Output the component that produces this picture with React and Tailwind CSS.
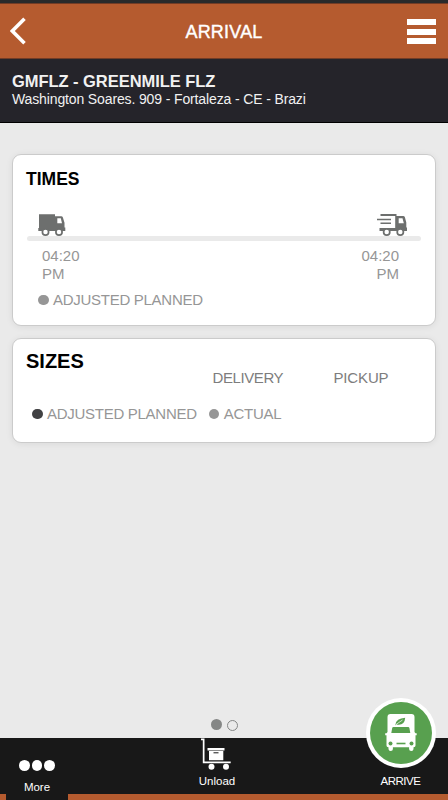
import React from "react";

function ParkedTruck() {
  return (
    <svg width="28" height="22" viewBox="0 0 28 22" className="block">
      <path fill="#6d6f6e" d="M1 .2h16v2h6.200q1.300 0 1.700 1.200l1.600 5.300v4.800h.8v3.500H.3v-3H1z" />
      <path fill="#fff" d="M19.300 4.200h3.500l1.200 5h-4.700z" />
      <circle cx="7.500" cy="18" r="3.100" fill="#fff" stroke="#6d6f6e" strokeWidth="1.700" />
      <circle cx="21" cy="18" r="3.100" fill="#fff" stroke="#6d6f6e" strokeWidth="1.700" />
    </svg>
  );
}

function MovingTruck() {
  return (
    <svg width="30" height="22" viewBox="0 0 30 22" className="block">
      <path fill="#6d6f6e" d="M3.500 .1h16v2h6.700q1.300 0 1.700 1.200l1.400 5.300v4.900h.7V17H2.500v-3h15.700V1.900H3.500z" />
      <path stroke="#6d6f6e" strokeWidth="1.500" d="M0 5.500h14M3.500 9.300H14" />
      <path fill="#fff" d="M21.700 4.200h3.800l1.300 5h-5.100z" />
      <circle cx="9.700" cy="18" r="3.100" fill="#fff" stroke="#6d6f6e" strokeWidth="1.700" />
      <circle cx="23.300" cy="18" r="3.100" fill="#fff" stroke="#6d6f6e" strokeWidth="1.700" />
    </svg>
  );
}

function Trolley() {
  return (
    <svg width="32" height="34" viewBox="0 0 32 34" className="block" fill="#fff">
      <path d="M0 .6h3.500V23.500h26.200v1.800H1.800V2.200H0z" />
      <path d="M6.500 10h17v2.400h-17zM8 13h14.300v9.300H8z" />
      <path stroke="#181818" strokeWidth="1" d="M12.500 14.800h5" />
      <circle cx="10.500" cy="28.700" r="3" />
      <circle cx="25" cy="28.700" r="3" />
    </svg>
  );
}

function ArriveTruck() {
  return (
    <svg width="70" height="70" viewBox="0 0 70 70" className="block">
      <circle cx="35" cy="35" r="35" fill="#fff" />
      <circle cx="35" cy="35" r="31" fill="#58a04f" />
      <path fill="#fff" d="M24.500 16h21q3 0 3 3v15l1 1.200h1.200v2h-1.200v10.300q0 1.800-1.800 1.800h-.2v1.700q0 2-2.200 2t-2.200-2v-1.700H26.900v1.700q0 2-2.200 2t-2.200-2v-1.700h-.2q-1.800 0-1.800-1.800V37.200h-1.300v-2h1.300l1-1.200V19q0-3 3-3z" />
      <path fill="#58a04f" d="M27.500 29h14.700q1 0 1.200 1l.9 5H25.300l.9-5q.2-1 1.300-1zM29.500 26.500q.5-6 9.700-6.700-.5 7-6.500 7-1.300 0-2.200-.6l-1.300 1.200z" />
      <path stroke="#fff" strokeWidth=".7" d="m30 26.500 6.500-4.500" />
      <circle cx="24.500" cy="45.500" r="2" fill="#58a04f" />
      <circle cx="45.500" cy="45.500" r="2" fill="#58a04f" />
      <path fill="#58a04f" d="M30.500 44.700h9v1.600h-9z" />
    </svg>
  );
}

function Label({ dot, children }) {
  return (
    <div className="flex items-center">
      <span className={"mr-[4.500px] size-[10.500px] shrink-0 rounded-full " + dot} />
      <span className="tracking-[-0.28px]">{children}</span>
    </div>
  );
}

export default function App() {
  return (
    <div className="flex h-[800px] w-[448px] flex-col overflow-hidden bg-[#eaeaea] font-['Liberation_Sans',Arial,sans-serif]">
      <div className="h-[3px] shrink-0 bg-[#292a2b]" />
      <header className="flex h-14 shrink-0 items-center justify-between border-b border-t border-b-[#713c26] border-t-[#713c26] bg-[#b55b2f] pl-[10px] pr-3 text-white">
        <svg width="30" height="28" viewBox="0 0 30 28" fill="none" stroke="#fff" strokeWidth="3.600">
          <path d="M14.500 1.800 2.300 14l12.200 12.200" />
        </svg>
        <h1 className="pl-[1px] pt-0.5 text-[18px] leading-5 tracking-[0.2px] [-webkit-text-stroke:0.4px_white]">ARRIVAL</h1>
        <div className="flex flex-col gap-[3.500px] pt-px">
          <span className="h-[6px] w-[29px] bg-white" />
          <span className="h-[6px] w-[29px] bg-white" />
          <span className="h-[6px] w-[29px] bg-white" />
        </div>
      </header>
      <section className="h-16 shrink-0 whitespace-nowrap border-b border-black bg-[#25242a] pl-[12px] pt-[13px] text-[#f1f1f1]">
        <h2 className="text-[16.500px] font-bold leading-[19px] tracking-[-0.05px]">GMFLZ - GREENMILE FLZ</h2>
        <p className="text-[14px] leading-4 tracking-[-0.13px]">Washington Soares. 909 - Fortaleza - CE - Brazi</p>
      </section>

      <main className="flex grow flex-col px-3 pt-[31px]">
        <section className="h-[172px] shrink-0 rounded-[9px] border border-[#cbcbcb] bg-white px-[13px] pt-[14px] text-[#969696] shadow-[0_1px_7px_rgba(0,0,0,0.07)]">
          <h2 className="text-[17.500px] font-bold leading-[21px] text-black">TIMES</h2>
          <div className="mt-[24px] flex h-[22px] justify-between pl-3 pr-[15px]">
            <ParkedTruck />
            <MovingTruck />
          </div>
          <div className="ml-px h-[5px] w-[394px] rounded-full bg-[#eaeaea]" />
          <div className="mt-[6px] flex justify-between pl-[16px] pr-[23px] text-[15px] leading-[17.500px]">
            <p>04:20<br />PM</p>
            <p className="text-right">04:20<br />PM</p>
          </div>
          <div className="mt-[9px] pl-[12px] text-[15px] leading-[18px]">
            <Label dot="bg-[#969696]">ADJUSTED PLANNED</Label>
          </div>
        </section>

        <section className="mt-3 h-[105px] shrink-0 rounded-[9px] border border-[#cbcbcb] bg-white px-[13px] pt-[10px] text-[#969696] shadow-[0_1px_7px_rgba(0,0,0,0.07)]">
          <h2 className="text-[20px] font-bold leading-6 text-black">SIZES</h2>
          <div className="-mt-[4px] flex pl-[186.500px] text-[15px] leading-[18px] tracking-[-0.4px] text-[#7d7d7d]">
            <span className="w-[121px]">DELIVERY</span>
            <span className="tracking-[-0.15px]">PICKUP</span>
          </div>
          <div className="mt-[18px] flex gap-3 pl-[6px] text-[15px] leading-[18px]">
            <Label dot="bg-[#414143]">ADJUSTED PLANNED</Label>
            <Label dot="bg-[#969696]">ACTUAL</Label>
          </div>
        </section>

        <div className="mb-[7px] mt-auto flex items-end justify-center gap-[5px]">
          <span className="mb-px size-[11px] rounded-full bg-[#858786]" />
          <span className="size-[11px] rounded-full border border-[#858786]" />
        </div>
      </main>

      <footer className="h-[62px] shrink-0 bg-[#181818] text-[11.500px] leading-[14px] text-white">
        <div className="flex h-14 justify-between">
          <div className="flex w-[68px] flex-col pl-[6px]">
            <div className="flex justify-center gap-[2.200px] pt-[22px]">
              <span className="size-[10.500px] rounded-full bg-white" />
              <span className="size-[10.500px] rounded-full bg-white" />
              <span className="size-[10.500px] rounded-full bg-white" />
            </div>
            <p className="mt-[9px] text-center">More</p>
          </div>
          <div className="flex grow flex-col items-center pl-[13px]">
            <Trolley />
            <p className="mt-[2px]">Unload</p>
          </div>
          <div className="flex w-[95px] flex-col">
            <div className="-mt-[40px] h-[70px] w-[70px] self-center">
              <ArriveTruck />
            </div>
            <p className="mt-[6px] text-center tracking-[-0.5px]">ARRIVE</p>
          </div>
        </div>
        <div className="flex h-[6px] justify-between">
          <span className="w-[6px] bg-[#b55b2f]" />
          <span className="w-[380px] bg-[#b55b2f]" />
        </div>
      </footer>
    </div>
  );
}
